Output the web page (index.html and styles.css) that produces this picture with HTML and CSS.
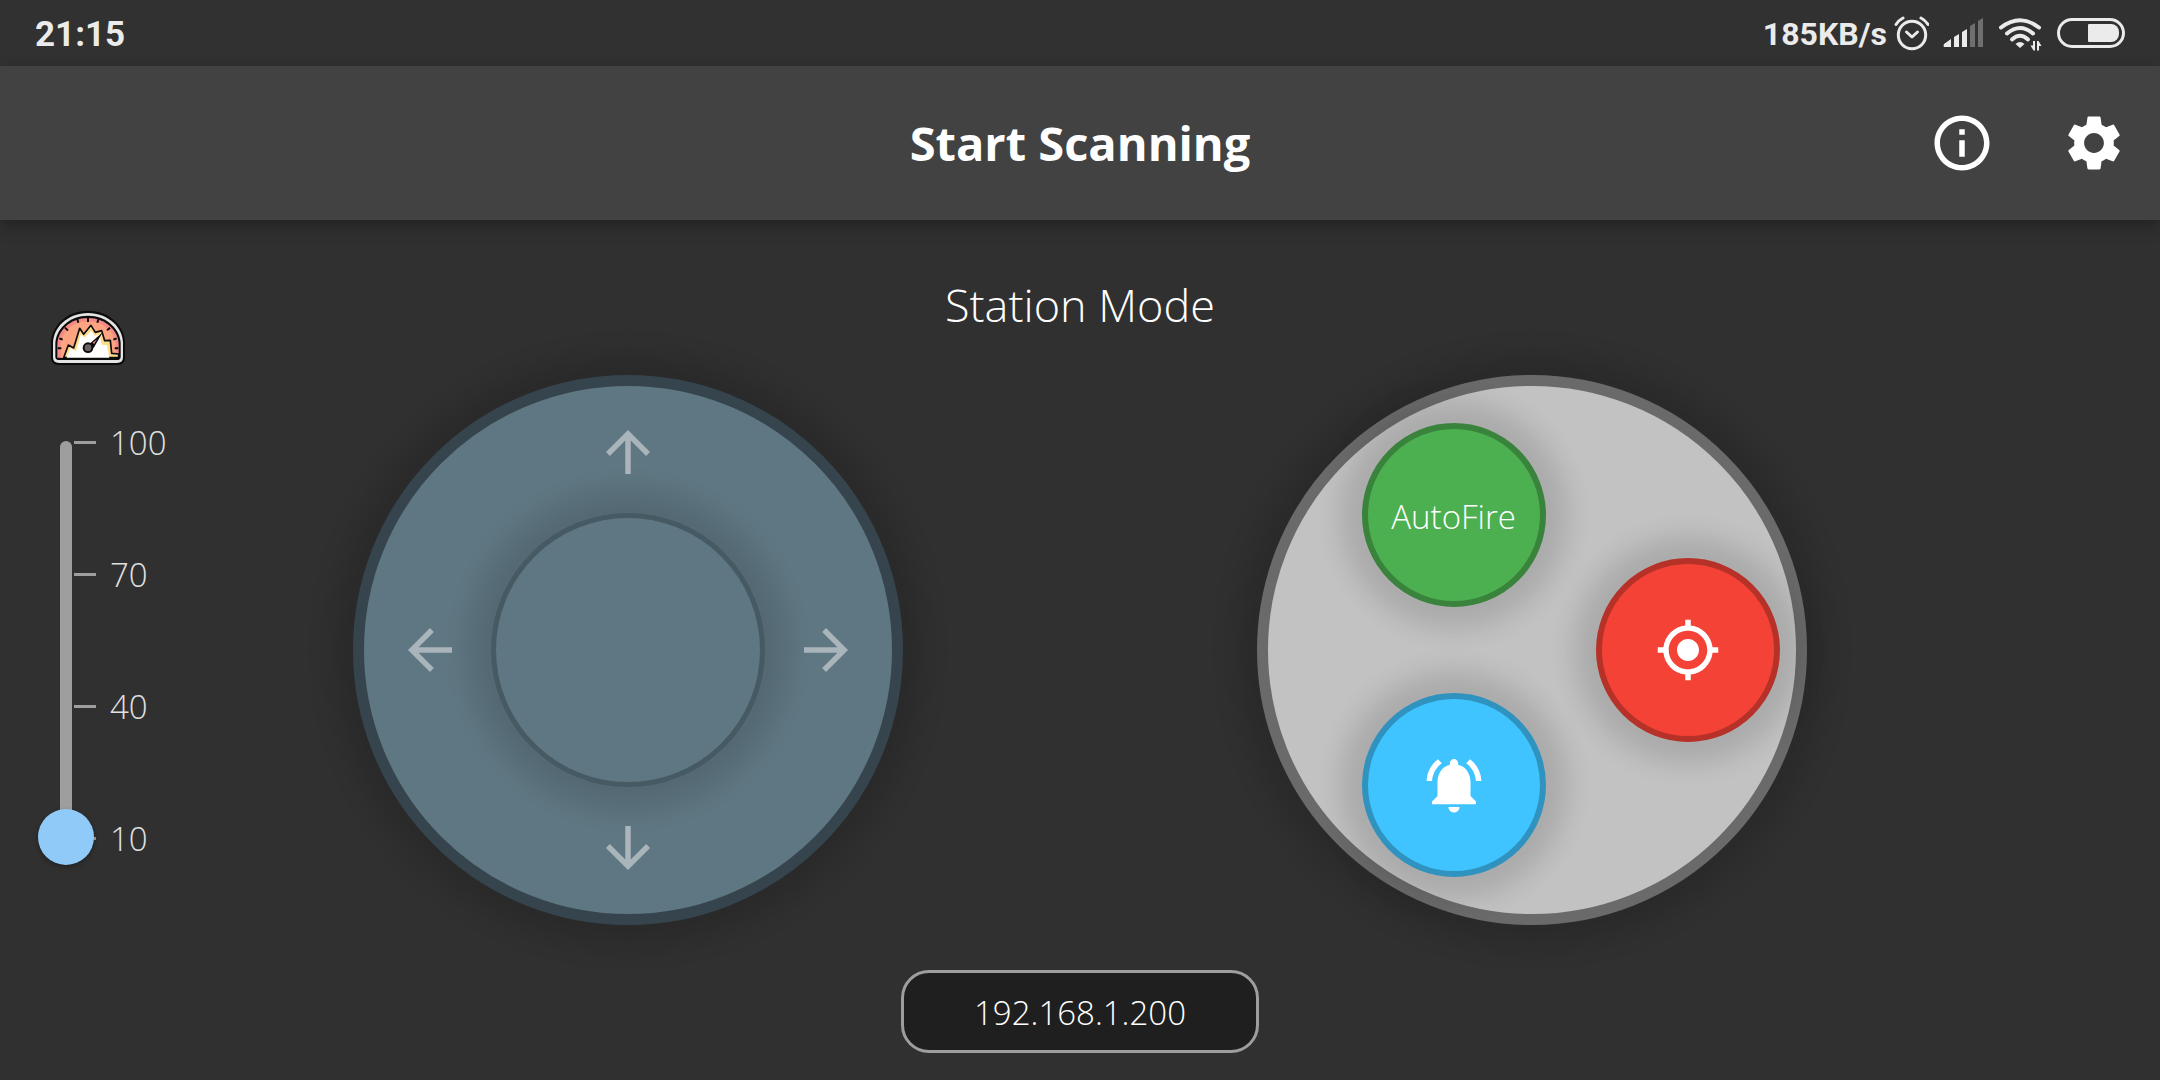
FILE: index.html
```html
<!DOCTYPE html>
<html lang="en">
<head>
<meta charset="utf-8">
<meta name="viewport" content="width=device-width, initial-scale=1">
<title>Start Scanning</title>
<link rel="stylesheet" href="styles.css">
</head>
<body>
<div class="status">
  <span class="status-time">21:15</span>
  <div class="status-icons">
    <div class="status-net">
      <span class="status-rate">185KB/s</span>
      <svg width="36" height="36" viewBox="0 0 36 36" fill="none" stroke="#ebebeb" stroke-width="3" aria-hidden="true">
        <circle cx="19" cy="20" r="13.7"/>
        <path d="M13.5 17l5.500 5 5.500-5" stroke-linejoin="round" stroke-linecap="round"/>
        <path d="M3 9.500Q6 5 10 3M35 9.500Q32 5 28 3" stroke-linecap="round"/>
      </svg>
    </div>
    <svg width="42" height="36" viewBox="0 0 42 36" fill="#ebebeb" aria-hidden="true">
      <path d="M1 32q-1-1 0-3l7-5v8zM11 32V22l5-3v13zM19 32V17l5-3v18z"/>
      <path d="M27 32V11l5-3v24zM35 32V6l5-3v29z" fill="#6f6f6f"/>
    </svg>
    <svg width="44" height="36" viewBox="0 0 44 36" fill="none" stroke="#ebebeb" stroke-width="4" aria-hidden="true">
      <path d="M2 12.500Q21 -2 40 12.500" stroke-linecap="round"/>
      <path d="M8 18.500Q21 7.500 34 18.500" stroke-linecap="round"/>
      <path d="M13 24.500Q21 17 29 24.500" stroke-linecap="round"/>
      <path d="M16.500 29q4.500-4 9 0l-4.500 4z" fill="#ebebeb" stroke="none"/>
      <path d="M36 26v9.500h-1.500l-3-5h2.500V26zM38 35.500V26h1.500l3 5H40v4.500z" fill="#ebebeb" stroke="none"/>
    </svg>
    <svg width="68" height="36" viewBox="0 0 68 36" aria-hidden="true">
      <rect x="1.500" y="4.500" width="65" height="27" rx="13.500" fill="none" stroke="#ebebeb" stroke-width="3"/>
      <path d="M32 9h22a8 8 0 0 1 8 8v2a8 8 0 0 1-8 8H32a1 1 0 0 1-1-1V10a1 1 0 0 1 1-1z" fill="#ebebeb"/>
    </svg>
  </div>
</div>

<header class="appbar">
  <h1 class="appbar-title">Start Scanning</h1>
  <div class="appbar-actions">
    <button class="appbar-button" type="button" aria-label="Information">
      <svg class="icon" viewBox="0 0 24 24"><path d="M11 7h2v2h-2zm0 4h2v6h-2zm1-9C6.480 2 2 6.480 2 12s4.480 10 10 10 10-4.480 10-10S17.520 2 12 2zm0 18c-4.410 0-8-3.590-8-8s3.590-8 8-8 8 3.590 8 8-3.590 8-8 8z"/></svg>
    </button>
    <button class="appbar-button" type="button" aria-label="Settings">
      <svg class="icon" viewBox="0 0 24 24"><path d="M19.140 12.940c.04-.3.06-.61.06-.94 0-.32-.02-.64-.07-.94l2.030-1.580c.18-.14.23-.41.12-.61l-1.920-3.320c-.12-.22-.37-.29-.59-.22l-2.390.96c-.5-.38-1.030-.7-1.620-.94l-.36-2.540c-.04-.24-.24-.41-.48-.41h-3.840c-.24 0-.43.17-.47.41l-.36 2.540c-.59.24-1.130.57-1.620.94l-2.390-.96c-.22-.08-.47 0-.59.22L2.740 8.870c-.12.21-.08.47.12.61l2.030 1.580c-.05.3-.09.63-.09.94s.02.64.07.94l-2.030 1.580c-.18.14-.23.41-.12.61l1.920 3.320c.12.22.37.29.59.22l2.390-.96c.5.38 1.030.7 1.620.94l.36 2.540c.05.24.24.41.48.41h3.840c.24 0 .44-.17.47-.41l.36-2.540c.59-.24 1.130-.56 1.620-.94l2.390.96c.22.08.47 0 .59-.22l1.920-3.320c.12-.22.07-.47-.12-.61l-2.010-1.580zM12 15.600c-1.980 0-3.600-1.620-3.600-3.600s1.620-3.600 3.600-3.600 3.600 1.620 3.600 3.600-1.620 3.600-3.600 3.600z"/></svg>
    </button>
  </div>
</header>

<main class="controls">
  <h2 class="mode">Station Mode</h2>

  <section class="speed">
    <svg class="speed-icon" viewBox="60 60 228 168" aria-hidden="true">
      <path d="M63 203V160C63 108 110 62 174 62S285 108 285 160V203Q285 225 261 225H87Q63 225 63 203z" fill="#0c0c0c"/>
      <path d="M69 202V160C69 112 114 69 174 69S279 112 279 160V202Q279 219 261 219H87Q69 219 69 202z" fill="#e4e4e4"/>
      <path d="M76 200V162C76 118 118 77 174 77S272 118 272 162V200Q272 210 260 210H88Q76 210 76 200z" fill="#0c0c0c"/>
      <path d="M82 203V164C82 122 122 84 174 84S266 122 266 164V203z" fill="#f58b86"/>
      <path d="M92 203V166C92 128 128 94 174 94S257 128 257 166V203z" fill="#ffa481"/>
      <path d="M101 203L115 165 131 174 149 115 161 133 183 106 196 127 215 122 224 152 241 151 245 190 266 192V203z" fill="#ffdc8a" stroke="#0c0c0c" stroke-width="5" stroke-linejoin="round"/>
      <path d="M110 203L121 175 138 183 153 133 164 143 183 122 195 138 209 133 215 164 231 166 238 203z" fill="#fff"/>
      <path d="M83 175h11M88 145l10 4M105 113l9 9M142 88l3 10M174 84v12M205 88l-3 10M240 113l-9 8M260 145l-10 4M265 175h-11" stroke="#0c0c0c" stroke-width="6" fill="none"/>
      <path d="M177 163L218 127 191 174z" fill="#0c0c0c"/>
      <path d="M188 158l13-10-9 14z" fill="#f58b86"/>
      <circle cx="174" cy="173" r="16" fill="#0c0c0c"/>
      <circle cx="174" cy="173" r="10" fill="#6a6268"/>
    </svg>
    <div class="slider">
      <span class="slider-track"></span>
      <input class="slider-input" type="range" min="10" max="100" value="10" aria-label="Speed">
      <ul class="scale">
        <li>100</li>
        <li>70</li>
        <li>40</li>
        <li>10</li>
      </ul>
    </div>
  </section>

  <section class="dial joystick" aria-label="Direction">
    <button class="arrow arrow-up" type="button" aria-label="Forward"><svg class="icon" viewBox="0 0 24 24"><path d="M4 12l1.410 1.410L11 7.830V20h2V7.830l5.580 5.590L20 12l-8-8-8 8z"/></svg></button>
    <button class="arrow arrow-left" type="button" aria-label="Left"><svg class="icon" viewBox="0 0 24 24"><path d="M20 11H7.830l5.590-5.590L12 4l-8 8 8 8 1.410-1.410L7.830 13H20v-2z"/></svg></button>
    <button class="knob" type="button" aria-label="Joystick"></button>
    <button class="arrow arrow-right" type="button" aria-label="Right"><svg class="icon" viewBox="0 0 24 24"><path d="M12 4l-1.410 1.410L16.170 11H4v2h12.170l-5.580 5.590L12 20l8-8z"/></svg></button>
    <button class="arrow arrow-down" type="button" aria-label="Back"><svg class="icon" viewBox="0 0 24 24"><path d="M20 12l-1.410-1.410L13 16.170V4h-2v12.170l-5.580-5.590L4 12l8 8 8-8z"/></svg></button>
  </section>

  <section class="dial pad" aria-label="Actions">
    <div class="pad-column">
      <button class="action action-auto" type="button">AutoFire</button>
      <button class="action action-alert" type="button" aria-label="Alert"><svg class="icon" viewBox="0 0 24 24"><path d="M7.580 4.080L6.150 2.650C3.750 4.480 2.170 7.300 2.030 10.500h2c.15-2.650 1.510-4.970 3.550-6.420zm12.390 6.420h2c-.15-3.200-1.730-6.020-4.120-7.850l-1.420 1.430c2.020 1.450 3.390 3.770 3.540 6.420zM18 11c0-3.070-1.640-5.640-4.500-6.320V4c0-.83-.67-1.500-1.500-1.500s-1.500.67-1.500 1.500v.68C7.630 5.360 6 7.920 6 11v5l-2 2v1h16v-1l-2-2v-5zm-6 11c.14 0 .27-.01.4-.04.65-.14 1.180-.58 1.440-1.180.1-.24.15-.5.15-.78h-4c.01 1.100.9 2 2.010 2z"/></svg></button>
    </div>
    <button class="action action-fire" type="button" aria-label="Fire"><svg class="icon" viewBox="0 0 24 24"><path d="M12 8c-2.210 0-4 1.790-4 4s1.790 4 4 4 4-1.790 4-4-1.790-4-4-4zm8.940 3c-.46-4.170-3.770-7.480-7.940-7.940V1h-2v2.060C6.830 3.520 3.520 6.830 3.060 11H1v2h2.060c.46 4.170 3.770 7.480 7.940 7.940V23h2v-2.060c4.170-.46 7.480-3.770 7.940-7.940H23v-2h-2.060zM12 19c-3.870 0-7-3.130-7-7s3.130-7 7-7 7 3.130 7 7-3.130 7-7 7z"/></svg></button>
  </section>

  <button class="address" type="button">192.168.1.200</button>
</main>
</body>
</html>
```
FILE: styles.css
```css
* {
  box-sizing: border-box;
}

body {
  margin: 0;
  min-height: 100vh;
  background: #303030;
  color: #fff;
  font-family: "Open Sans", "Noto Sans", sans-serif;
  font-size: 33px;
  font-weight: 300;
}

button {
  margin: 0;
  padding: 0;
  border: 0;
  background: none;
  color: inherit;
  font: inherit;
}

svg {
  display: block;
}

.icon {
  width: 66px;
  height: 66px;
  fill: currentColor;
}

/* Status bar */
.status {
  display: flex;
  align-items: center;
  justify-content: space-between;
  height: 66px;
  padding: 0 35px;
  background: #313131;
  color: #ebebeb;
  font-family: Roboto, sans-serif;
  font-weight: 700;
}

.status-time,
.status-rate {
  padding-top: 2px;
}

.status-time {
  font-size: 35px;
}

.status-icons {
  display: flex;
  align-items: center;
  gap: 14px;
}

.status-net {
  display: flex;
  align-items: center;
  gap: 6px;
  font-size: 32px;
}

/* App bar */
.appbar {
  display: grid;
  grid-template-columns: 1fr auto 1fr;
  align-items: center;
  height: 154px;
  background: #424242;
  box-shadow: 0 6px 16px rgba(0, 0, 0, 0.3);
}

.appbar-title {
  grid-column: 2;
  margin: 0;
  font-size: 47px;
  font-weight: 700;
}

.appbar-actions {
  display: flex;
  justify-content: flex-end;
}

.appbar-button {
  display: grid;
  place-items: center;
  width: 132px;
  height: 132px;
}

/* Controls */
.controls {
  display: grid;
  grid-template-columns: 1fr 550px 1fr 550px 1fr;
  grid-template-rows: 155px auto auto;
  padding-bottom: 27px;
}

.mode {
  grid-column: 1 / -1;
  grid-row: 1;
  margin: 0;
  padding-top: 54px;
  font-size: 45px;
  line-height: 62px;
  font-weight: 300;
  text-align: center;
}

.speed {
  grid-column: 1;
  grid-row: 1 / 3;
  padding: 90px 0 0 38px;
}

.speed-icon {
  width: 76px;
  height: 56px;
  margin: 0 0 49px 12px;
}

.slider {
  display: grid;
  grid-template-columns: 56px 1fr;
  height: 450px;
}

.slider-track {
  grid-area: 1 / 1;
  justify-self: center;
  width: 12px;
  margin: 26px 0;
  border-radius: 6px;
  background: #9e9e9e;
}

.slider-input {
  grid-area: 1 / 1;
  z-index: 1;
  width: 56px;
  height: 450px;
  margin: 0;
  appearance: none;
  background: none;
  writing-mode: vertical-lr;
  direction: rtl;
}

.slider-input::-webkit-slider-thumb {
  appearance: none;
  width: 56px;
  height: 56px;
  border-radius: 50%;
  background: #90caf9;
  box-shadow: 0 2px 5px rgba(0, 0, 0, 0.3);
}

.scale {
  grid-area: 1 / 2;
  display: flex;
  flex-direction: column;
  justify-content: space-between;
  margin: 0 0 0 -20px;
  padding: 6px 0 4px;
  list-style: none;
  line-height: 44px;
  color: #e0e0e0;
}

.scale li {
  display: flex;
  align-items: center;
  gap: 14px;
}

.scale li::before {
  content: "";
  width: 22px;
  height: 3px;
  margin-bottom: 2px;
  background: #9e9e9e;
}

.dial {
  grid-row: 2;
  width: 550px;
  height: 550px;
  border: 11px solid;
  border-radius: 50%;
  box-shadow: 0 0 26px 22px rgba(0, 0, 0, 0.12);
}

.joystick {
  grid-column: 2;
  display: grid;
  grid-template-columns: 66px 274px 66px;
  grid-template-rows: 66px 274px 66px;
  gap: 28px;
  place-content: center;
  place-items: center;
  border-color: #36454d;
  background: #5f7782;
}

.arrow {
  z-index: 1;
  color: #a9b5bb;
}

.arrow-up {
  grid-area: 1 / 2;
}

.arrow-left {
  grid-area: 2 / 1;
}

.arrow-right {
  grid-area: 2 / 3;
}

.arrow-down {
  grid-area: 3 / 2;
}

.knob {
  grid-area: 2 / 2;
  width: 274px;
  height: 274px;
  border: 5px solid #465a63;
  border-radius: 50%;
  background: #5f7782;
  box-shadow: 0 0 26px 22px rgba(0, 0, 0, 0.12);
}

.pad {
  grid-column: 4;
  display: flex;
  align-items: center;
  gap: 50px;
  padding-left: 94px;
  border-color: #6a6a6a;
  background: #c2c2c2;
}

.pad-column {
  display: flex;
  flex-direction: column;
  gap: 86px;
}

.action {
  display: grid;
  place-items: center;
  width: 184px;
  height: 184px;
  border: 6px solid;
  border-radius: 50%;
  box-shadow: 0 0 26px 22px rgba(0, 0, 0, 0.12);
}

.action-auto {
  padding-top: 2px;
  border-color: #3a833d;
  background: #4caf50;
}

.action-alert {
  border-color: #3092bf;
  background: #40c4ff;
}

.action-fire {
  border-color: #b63229;
  background: #f44336;
}

.address {
  grid-column: 1 / -1;
  grid-row: 3;
  justify-self: center;
  width: 358px;
  height: 83px;
  margin-top: 45px;
  padding-top: 2px;
  border: 3px solid #9e9e9e;
  border-radius: 28px;
  background: #1f1f1f;
}
```
